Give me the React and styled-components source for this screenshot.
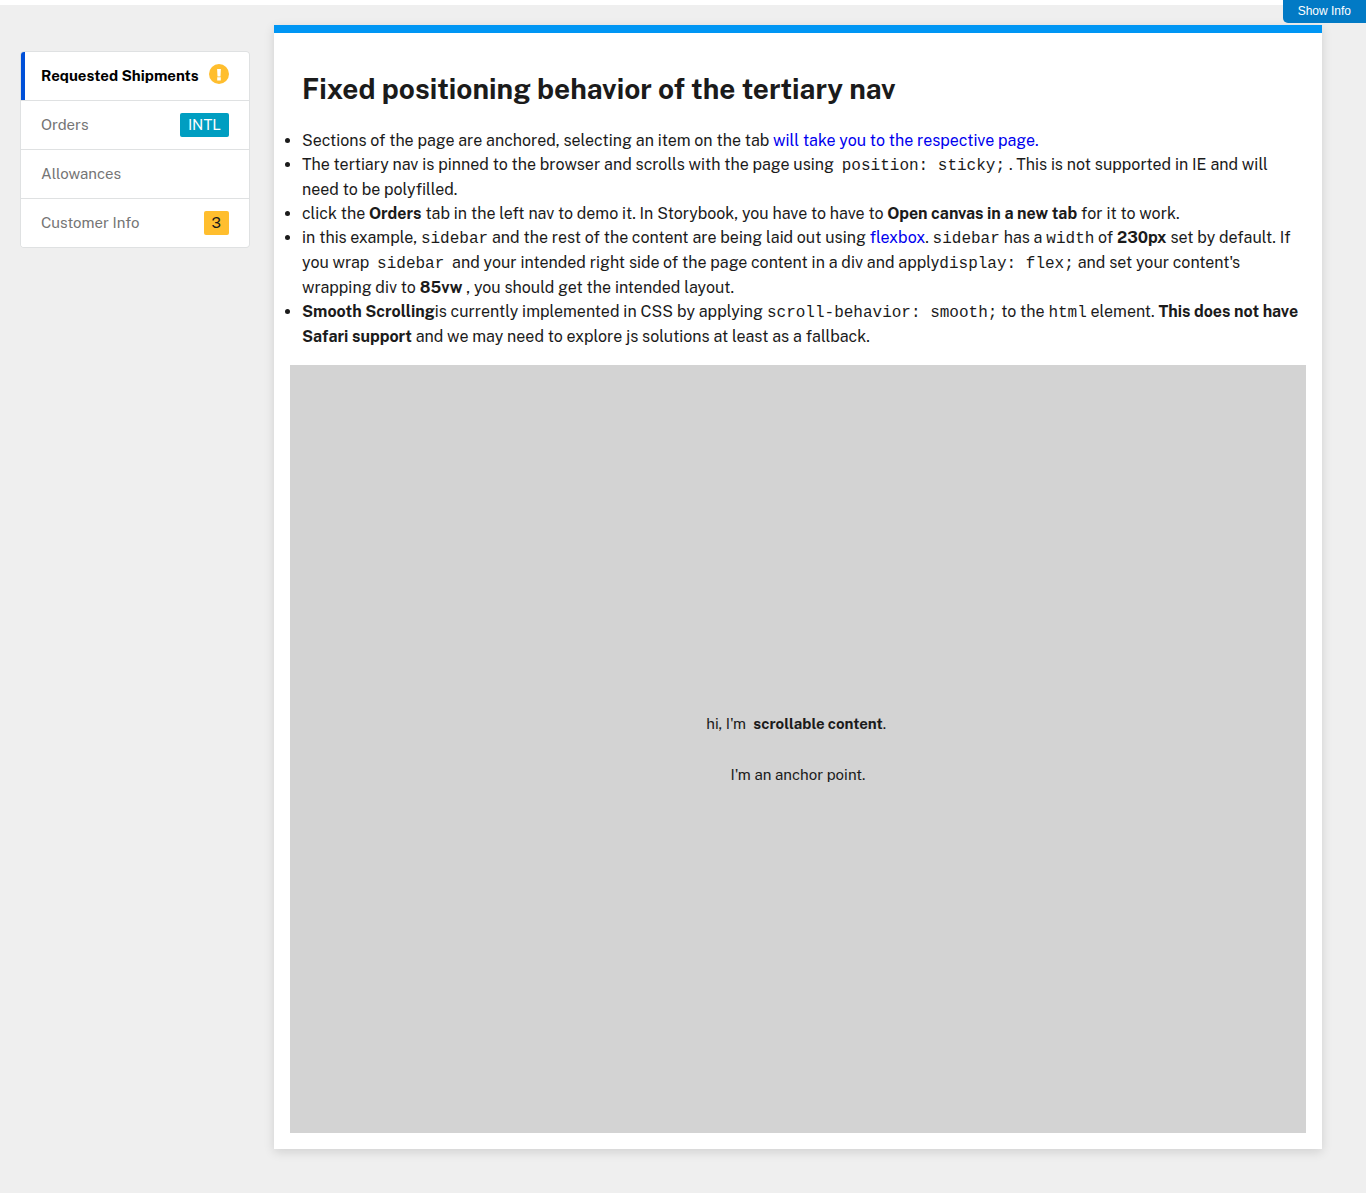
import React from "react";
import styled, { createGlobalStyle } from "styled-components";

const Global = createGlobalStyle`
  *, *::before, *::after { box-sizing: border-box; }
  html { scroll-behavior: smooth; }
  body {
    margin: 0;
    background: #efefef;
    color: #1b1b1b;
    font-family: "Public Sans", Inter, "Liberation Sans", sans-serif;
    font-size: 16px;
    line-height: 24px;
  }
`;

const Page = styled.div`
  position: relative;
  display: flex;
  align-items: flex-start;
  gap: 24px;
  min-height: 100vh;
  padding: 20px 44px 44px 20px;
  border-top: 5px solid #fff;
`;

const InfoButton = styled.button`
  position: absolute;
  top: -5px;
  right: 0;
  padding: 3px 15px 4px;
  border: 0;
  border-radius: 0 0 0 5px;
  background: #027ac5;
  color: #fff;
  font: 12px/16px "Liberation Sans", Arial, sans-serif;
  cursor: pointer;
`;

const Sidebar = styled.nav`
  position: sticky;
  top: 26px;
  flex: 0 0 230px;
  display: grid;
  gap: 1px;
  margin-top: 26px;
  border: 1px solid #dfe1e2;
  border-radius: 4px;
  background: #dfe1e2;
  overflow: hidden;
`;

const NavItem = styled.a`
  display: flex;
  align-items: center;
  justify-content: space-between;
  height: 48px;
  padding: 0 20px 0 16px;
  border-left: 4px solid ${(p) => (p.$active ? "#0050d8" : "#fff")};
  background: #fff;
  color: ${(p) => (p.$active ? "#000" : "#757575")};
  font-size: 15px;
  font-weight: ${(p) => (p.$active ? 700 : 400)};
  text-decoration: none;
  white-space: nowrap;
`;

const Tag = styled.span`
  padding: 0 8px;
  border-radius: 2px;
  background: ${(p) => (p.$warm ? "#ffbe2e" : "#009ec1")};
  color: ${(p) => (p.$warm ? "#1b1b1b" : "#fff")};
`;

const AlertIcon = styled.svg`
  flex: none;
  width: 20px;
  height: 20px;
  margin-bottom: 4px;
`;

const Card = styled.main`
  flex: 1;
  min-width: 0;
  padding: 32px 16px 16px;
  border-top: 8px solid #0096f4;
  background: #fff;
  box-shadow: 0 3px 10px rgba(0, 0, 0, 0.13);
`;

const Title = styled.h1`
  margin: 0 12px 16px;
  font-size: 28px;
  line-height: 48px;
  font-weight: 700;
`;

const Notes = styled.ul`
  margin: 0 0 16px;
  padding-left: 12px;
`;

const Code = styled.code`
  font-family: "Liberation Mono", "Courier New", monospace;
  font-size: 16px;
`;

const TextLink = styled.a`
  color: #0000ee;
  text-decoration: none;
`;

const Demo = styled.section`
  display: flex;
  flex-direction: column;
  align-items: center;
  justify-content: center;
  gap: 27px;
  height: 768px;
  background: #d3d3d3;
  font-size: 15px;
`;

const DemoText = styled.p`
  margin: 0;
`;

export default function App() {
  return (
    <>
      <Global />
      <Page>
        <InfoButton type="button">Show Info</InfoButton>
        <Sidebar aria-label="Tertiary">
          <NavItem href="#shipments" $active aria-current="page">
            Requested Shipments
            <AlertIcon viewBox="0 0 20 20" role="img" aria-label="Attention">
              <circle cx="10" cy="10" r="10" fill="#ffbe2e" />
              <path d="M8.1 5h3.8l-.4 7.4H8.5zM8.2 13.3h3.6v3.2H8.2z" fill="#fff" />
            </AlertIcon>
          </NavItem>
          <NavItem href="#orders">
            Orders <Tag>INTL</Tag>
          </NavItem>
          <NavItem href="#allowances">Allowances</NavItem>
          <NavItem href="#customer">
            Customer Info <Tag $warm>3</Tag>
          </NavItem>
        </Sidebar>
        <Card id="shipments">
          <Title>Fixed positioning behavior of the tertiary nav</Title>
          <Notes>
            <li>
              Sections of the page are anchored, selecting an item on the tab{" "}
              <TextLink href="#orders">will take you to the respective page.</TextLink>
            </li>
            <li>
              The tertiary nav is pinned to the browser and scrolls with the page using&nbsp;{" "}
              <Code>position: sticky;</Code> . This is not supported in IE and will need to be polyfilled.
            </li>
            <li>
              click the <b>Orders</b> tab in the left nav to demo it. In Storybook, you have to have to{" "}
              <b>Open canvas in a new tab</b> for it to work.
            </li>
            <li>
              in this example, <Code>sidebar</Code> and the rest of the content are being laid out using{" "}
              <TextLink href="#flexbox">flexbox</TextLink>. <Code>sidebar</Code> has a <Code>width</Code> of{" "}
              <b>230px</b> set by default. If you wrap&nbsp; <Code>sidebar</Code> &nbsp;and your intended right
              side of the page content in a div and apply<Code>display: flex;</Code> and set your content's
              wrapping div to <b>85vw</b> , you should get the intended layout.
            </li>
            <li>
              <b>Smooth Scrolling</b>is currently implemented in CSS by applying{" "}
              <Code>scroll-behavior: smooth;</Code> to the <Code>html</Code> element.{" "}
              <b>This does not have Safari support</b> and we may need to explore js solutions at least as a
              fallback.
            </li>
          </Notes>
          <Demo id="orders">
            <DemoText>
              hi, I'm&nbsp; <b>scrollable content</b>.&nbsp;
            </DemoText>
            <DemoText>I'm an anchor point.</DemoText>
          </Demo>
        </Card>
      </Page>
    </>
  );
}
